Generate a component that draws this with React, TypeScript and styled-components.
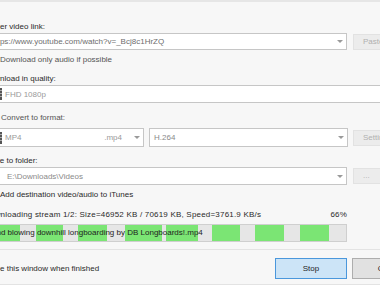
import * as React from 'react';
import styled, { createGlobalStyle } from 'styled-components';

const GlobalStyle = createGlobalStyle`
	html, body {
		margin: 0;
		padding: 0;
		background: #f7f7f7;
		overflow: hidden;
	}
	body {
		font-family: "Liberation Sans", Arial, sans-serif;
		font-size: 8px;
		color: #2a2a2a;
	}
`;

// the dialog is cut off on the left, so the window starts left of the page
const Window = styled.div`
	width: 446px;
	margin-left: -18px;
	border-top: 2px solid #e6e6e6;
	display: flex;
	flex-direction: column;
`;

const Main = styled.div`
	display: flex;
	flex-direction: column;
	padding-top: 19px;
`;

const Label = styled.div<{ $gap: number; $x?: number }>`
	margin-top: ${(p) => p.$gap}px;
	padding-left: ${(p) => p.$x || 0}px;
	line-height: 12px;
	color: #2a2a2a;
	white-space: nowrap;
`;

const Row = styled.div<{ $gap?: number }>`
	display: grid;
	grid-template-columns: 1fr 75px;
	column-gap: 6px;
	align-items: center;
	margin-top: ${(p) => p.$gap || 0}px;
`;

const FormatRow = styled(Row)`
	grid-template-columns: 162px 1fr 75px;
	column-gap: 5px;
`;

const Field = styled.div<{ $h: number; $pad: number }>`
	height: ${(p) => p.$h}px;
	box-sizing: border-box;
	border: 1px solid #c6c6c6;
	background: #fff;
	display: flex;
	align-items: center;
	padding-left: ${(p) => p.$pad}px;
	gap: 3px;
	white-space: nowrap;
	overflow: hidden;
`;

const FieldText = styled.span<{ $tone?: string }>`
	flex: 1;
	color: ${(p) => p.$tone || '#8a8a8a'};
`;

const Suffix = styled.span`
	color: #9a9a9a;
	margin-right: 6px;
`;

const Arrow = styled.span`
	width: 12px;
	display: flex;
	justify-content: center;
	&::after {
		content: '';
		border-top: 3px solid #9a9a9a;
		border-left: 3px solid transparent;
		border-right: 3px solid transparent;
	}
`;

const SideButton = styled.div`
	height: 16px;
	box-sizing: border-box;
	background: #ececec;
	border: 1px solid #e2e2e2;
	color: #b0b0b0;
	line-height: 14px;
	padding-left: 9px;
	white-space: nowrap;
	overflow: hidden;
`;

const CheckRow = styled.label<{ $gap: number; $dim?: boolean; $x?: number }>`
	display: flex;
	align-items: center;
	gap: 3px;
	margin-top: ${(p) => p.$gap}px;
	padding-left: ${(p) => p.$x || 0}px;
	line-height: 12px;
	color: ${(p) => (p.$dim ? '#555' : '#2a2a2a')};
	white-space: nowrap;
`;

const Box = styled.span`
	width: 13px;
	height: 13px;
	box-sizing: border-box;
	border: 1px solid #8f8f8f;
	background: #fff;
	flex: none;
`;

const Status = styled.div`
	display: flex;
	justify-content: space-between;
	margin: 8px 81px 0 0;
	padding-left: 2px;
	line-height: 12px;
	letter-spacing: 0.2px;
	white-space: nowrap;
`;

const Bar = styled.div`
	position: relative;
	height: 18px;
	box-sizing: border-box;
	margin: 3px 81px 0 0;
	border: 1px solid #cfcfcf;
	background: #e6e6e6;
	overflow: hidden;
`;

const Chunk = styled.span`
	position: absolute;
	top: 0;
	bottom: 0;
	background: #7be574;
`;

const BarText = styled.div`
	position: relative;
	line-height: 16px;
	padding-left: 5px;
	color: #1e1e1e;
	white-space: nowrap;
`;

const Footer = styled.div`
	margin-top: 7px;
	height: 36px;
	box-sizing: border-box;
	padding: 8px 4px 0 0;
	border-top: 1px solid #e3e3e3;
	border-bottom: 1px solid #e3e3e3;
	display: flex;
	align-items: flex-start;
`;

const FooterCheck = styled(CheckRow)`
	margin-left: -14px;
	margin-top: 4px;
	flex: 1;
`;

const Button = styled.div<{ $primary?: boolean }>`
	width: 72px;
	height: 21px;
	box-sizing: border-box;
	margin-left: 5px;
	border: 1px solid ${(p) => (p.$primary ? '#4a97dc' : '#adadad')};
	background: ${(p) => (p.$primary ? '#cce4f7' : '#e1e1e1')};
	color: #1e1e1e;
	line-height: 19px;
	text-align: center;
`;

const FilmIcon = () => (
	<svg width="10" height="12" viewBox="0 0 10 12">
		<rect x="0.5" y="0.5" width="9" height="11" fill="#fff" stroke="#555" />
		<rect x="0" y="0" width="2" height="12" fill="#555" />
		<rect x="8" y="0" width="2" height="12" fill="#555" />
		{[2, 5, 8].map((y) => (
			<React.Fragment key={y}>
				<rect x="0.5" y={y} width="1" height="1" fill="#fff" />
				<rect x="8.5" y={y} width="1" height="1" fill="#fff" />
			</React.Fragment>
		))}
	</svg>
);

// downloaded chunks, in px from the bar's inner left edge
const chunks = [
	[0, 37],
	[53, 80],
	[95, 124],
	[142, 179],
	[183, 215],
	[229, 257],
	[272, 301],
	[317, 346]
];

export default function App() {
	return (
		<>
			<GlobalStyle />
			<Window>
				<Main>
					<Label $gap={0} $x={6}>Enter video link:</Label>
					<Row>
						<Field $h={17} $pad={8}>
							<FieldText $tone="#6e6e6e">https://www.youtube.com/watch?v=_Bcj8c1HrZQ</FieldText>
							<Arrow />
						</Field>
						<SideButton>Paste</SideButton>
					</Row>
					<CheckRow $gap={3} $dim $x={2}>
						<Box />
						Download only audio if possible
					</CheckRow>

					<Label $gap={7} $x={2}>Download in quality:</Label>
					<Field $h={18} $pad={9}>
						<FilmIcon />
						<FieldText $tone="#9a9a9a">FHD 1080p</FieldText>
						<Suffix>1080p</Suffix>
						<Arrow />
					</Field>

					<CheckRow $gap={8} $dim $x={3}>
						<Box />
						Convert to format:
					</CheckRow>
					<FormatRow $gap={4}>
						<Field $h={19} $pad={9}>
							<FilmIcon />
							<FieldText $tone="#9a9a9a">MP4</FieldText>
							<Suffix>.mp4</Suffix>
							<Arrow />
						</Field>
						<Field $h={19} $pad={4}>
							<FieldText $tone="#8a8a8a">H.264</FieldText>
							<Arrow />
						</Field>
						<SideButton>Settings</SideButton>
					</FormatRow>

					<Label $gap={8} $x={4}>Save to folder:</Label>
					<Row>
						<Field $h={18} $pad={24}>
							<FieldText $tone="#8a8a8a">E:\Downloads\Videos</FieldText>
							<Arrow />
						</Field>
						<SideButton>...</SideButton>
					</Row>
					<CheckRow $gap={3} $x={2}>
						<Box />
						Add destination video/audio to iTunes
					</CheckRow>

					<Status>
						<span>Downloading stream 1/2: Size=46952 KB / 70619 KB, Speed=3761.9 KB/s</span>
						<span>66%</span>
					</Status>
					<Bar>
						{chunks.map(([a, b]) => (
							<Chunk key={a} style={{ left: a, width: b - a }} />
						))}
						<BarText>Mind blowing downhill longboarding by DB Longboards!.mp4</BarText>
					</Bar>
				</Main>

				<Footer>
					<FooterCheck $gap={0}>
						<Box />
						Close this window when finished
					</FooterCheck>
					<Button $primary>Stop</Button>
					<Button>Close</Button>
				</Footer>
			</Window>
		</>
	);
}
